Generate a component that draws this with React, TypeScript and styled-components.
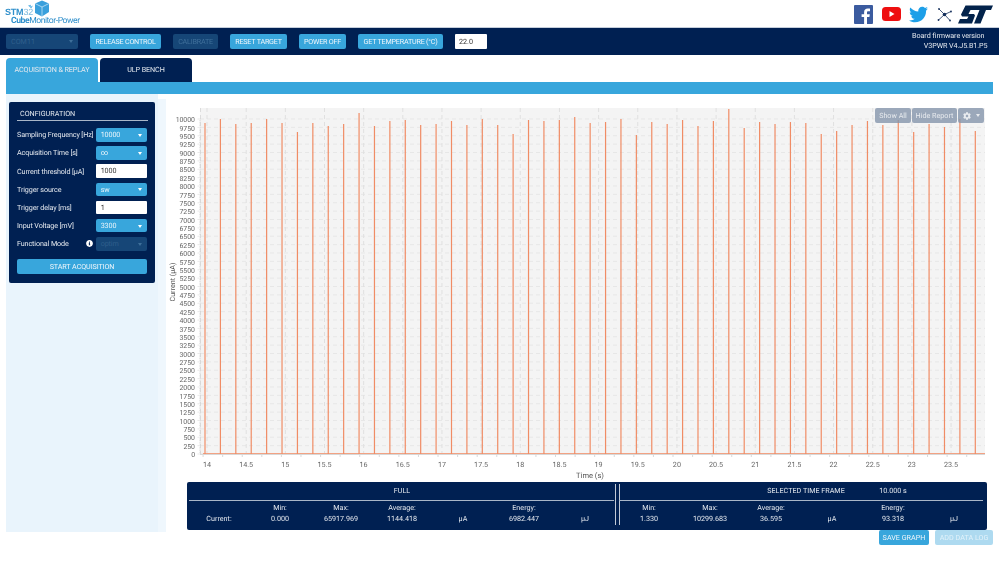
import React from 'react';
import styled, { createGlobalStyle } from 'styled-components';
import { FaCog, FaInfoCircle, FaTwitter } from 'react-icons/fa';

const Global = createGlobalStyle`
  html, body { margin: 0; padding: 0; background: #fff; }
  body { font-family: Roboto, "Liberation Sans", sans-serif; text-rendering: geometricPrecision; }
  * { box-sizing: border-box; }
`;

const NAVY = '#002052';
const BLUE = '#38a6dc';
const INK = '#e4e9ef';

const Page = styled.div`
  width: 999px;
  height: 562px;
  overflow: hidden;
  display: flex;
  flex-direction: column;
  filter: blur(0.3px);
`;
const TopBar = styled.header`
  height: 27px;
  display: flex;
  align-items: flex-start;
  justify-content: space-between;
`;
const Logo = styled.div`
  position: relative;
  width: 90px;
  height: 27px;
  flex: none;
  display: flex;
  flex-direction: column;
  color: #2f8fcb;
`;
const LogoTop = styled.div`
  font-size: 9px;
  line-height: 9px;
  margin: 8px 0 0 5px;
  letter-spacing: -0.2px;
  font-family: "Liberation Sans", sans-serif;
`;
const LogoBottom = styled.div`
  font-size: 8.6px;
  line-height: 9px;
  margin: 0 0 0 11px;
  white-space: nowrap;
  letter-spacing: -0.45px;
`;
const LogoStrong = styled.b`
  font-weight: 700;
`;
const LogoLight = styled.span`
  color: #7ab9de;
`;
const Cube = styled.svg`
  position: absolute;
  left: 27px;
  top: 0;
`;
const Socials = styled.div`
  display: flex;
  align-items: center;
  height: 28px;
  padding-right: 6px;
`;
const Social = styled.span<{ $gap: number }>`
  display: flex;
  margin-left: ${(p) => p.$gap}px;
`;
const NavBar = styled.nav`
  height: 28px;
  flex: none;
  background: ${NAVY};
  border-top: 1px solid #c5cedb;
  display: flex;
  align-items: center;
  padding: 0 12px 1px 6px;
  gap: 12px;
`;
const NavButton = styled.button<{ $w: number; $off?: boolean }>`
  width: ${(p) => p.$w}px;
  height: 15px;
  border: 0;
  padding: 0;
  border-radius: 2px;
  font: 400 7.2px Roboto, sans-serif;
  letter-spacing: -0.22px;
  white-space: nowrap;
  background: ${(p) => (p.$off ? '#164677' : BLUE)};
  color: ${(p) => (p.$off ? '#3f6f9a' : '#eef6fb')};
`;
const NavSelect = styled.div`
  position: relative;
  width: 72px;
  height: 15px;
  border-radius: 2px;
  background: #164677;
  color: #2f5f8c;
  font-size: 7.2px;
  line-height: 15px;
  padding-left: 5px;
`;
const Arrow = styled.i<{ $c?: string }>`
  position: absolute;
  right: 5px;
  top: 50%;
  margin-top: -1px;
  border-left: 2.5px solid transparent;
  border-right: 2.5px solid transparent;
  border-top: 3px solid ${(p) => p.$c || '#fff'};
`;
const TempInput = styled.div`
  width: 32px;
  height: 15px;
  background: #fff;
  border-radius: 1px;
  color: #333;
  font-size: 7.2px;
  line-height: 15px;
  padding-left: 4px;
`;
const Firmware = styled.div`
  margin-left: auto;
  margin-right: -0.5px;
  text-align: right;
  color: ${INK};
  font-size: 7.2px;
  letter-spacing: -0.08px;
  line-height: 10.5px;
`;
const FirmwareTop = styled.div`
  padding-right: 3px;
`;
const Content = styled.main`
  padding: 3px 6px 0;
  flex: 1;
  display: flex;
  flex-direction: column;
`;
const Tabs = styled.div`
  display: flex;
  gap: 2px;
  height: 24px;
  flex: none;
`;
const Tab = styled.div<{ $active?: boolean }>`
  width: 92px;
  border-radius: 4px 4px 0 0;
  background: ${(p) => (p.$active ? BLUE : NAVY)};
  color: ${INK};
  font-size: 7.2px;
  letter-spacing: -0.1px;
  display: flex;
  align-items: center;
  justify-content: center;
  padding-bottom: 2px;
`;
const Band = styled.div`
  height: 12px;
  flex: none;
  background: ${BLUE};
`;
const Workspace = styled.div`
  display: flex;
  flex: 1;
`;
const Sidebar = styled.aside`
  width: 160px;
  height: 438px;
  flex: none;
  display: flex;
`;
const SideMain = styled.div`
  width: 152px;
  background: #e9f4fc;
  padding: 8px 3px;
`;
const SideStrip = styled.div`
  width: 8px;
  margin-top: 5px;
  background: #eff7fd;
`;
const ConfigPanel = styled.section`
  width: 146px;
  height: 181px;
  background: ${NAVY};
  border-radius: 2px;
  padding: 0 8px;
  color: ${INK};
  display: flex;
  flex-direction: column;
`;
const ConfigTitle = styled.div`
  height: 19px;
  border-bottom: 1px solid #a9b6c8;
  margin-right: -1px;
  padding: 4px 0 0 3px;
  font-size: 7.2px;
  line-height: 15px;
`;
const Rows = styled.div`
  margin-top: 7px;
  display: flex;
  flex-direction: column;
  gap: 4.7px;
`;
const Row = styled.div`
  display: grid;
  grid-template-columns: 78.7px 51.3px;
  height: 13.5px;
  align-items: center;
  font-size: 7.2px;
  letter-spacing: -0.12px;
  white-space: nowrap;
`;
const LabelCell = styled.div`
  position: relative;
`;
const InfoDot = styled.span`
  position: absolute;
  right: 3px;
  top: 1px;
  display: flex;
  color: #fff;
`;
const Pick = styled.div<{ $off?: boolean }>`
  position: relative;
  height: 13.5px;
  border-radius: 2px;
  background: ${(p) => (p.$off ? '#164677' : BLUE)};
  color: ${(p) => (p.$off ? '#2f5f8c' : '#eaf5fb')};
  line-height: 13.5px;
  padding-left: 5px;
`;
const Field = styled.div`
  height: 13.5px;
  background: #fff;
  border-radius: 1px;
  color: #333;
  line-height: 13.5px;
  padding-left: 5px;
`;
const StartButton = styled.button`
  margin-top: 8px;
  height: 15px;
  width: 130px;
  flex: none;
  border: 0;
  padding: 0;
  border-radius: 2px;
  background: ${BLUE};
  color: #eef6fb;
  font: 400 7.2px Roboto, sans-serif;
  letter-spacing: -0.1px;
`;
const MainArea = styled.div`
  width: 827px;
  flex: none;
  padding-top: 6px;
`;
const ChartWrap = styled.div`
  position: relative;
  margin-left: 2px;
  width: 820px;
  height: 381.5px;
`;
const Plot = styled.svg`
  display: block;
`;
const ChartTools = styled.div`
  position: absolute;
  top: 8px;
  left: 707px;
  display: flex;
  gap: 1px;
`;
const ToolButton = styled.div<{ $w: number }>`
  width: ${(p) => p.$w}px;
  height: 15px;
  border-radius: 2px;
  background: rgba(133, 149, 171, 0.8);
  color: #e8ebef;
  font-size: 7.2px;
  display: flex;
  align-items: center;
  justify-content: center;
  gap: 5px;
`;
const ToolCaret = styled.i`
  border-left: 2.5px solid transparent;
  border-right: 2.5px solid transparent;
  border-top: 3px solid #e8ebef;
`;
const StatsPanel = styled.section`
  margin-left: 21px;
  width: 800px;
  height: 48.5px;
  background: ${NAVY};
  border-radius: 2px;
  color: ${INK};
  font-size: 7.2px;
  display: flex;
  padding-left: 1.5px;
`;
const StatsSide = styled.div<{ $cols: number }>`
  width: ${(p) => p.$cols * 61}px;
  flex: none;
  display: flex;
  flex-direction: column;
`;
const StatsHead = styled.div<{ $cols: number }>`
  height: 19px;
  border-bottom: 1.5px solid #a9b6c8;
  display: grid;
  grid-template-columns: repeat(${(p) => p.$cols}, 61px);
  align-items: center;
  text-align: center;
  margin-right: 2px;
`;
const HeadCell = styled.div<{ $from: number; $to: number; $shift?: number }>`
  grid-column: ${(p) => p.$from} / ${(p) => p.$to};
  padding-left: ${(p) => p.$shift || 0}px;
  white-space: nowrap;
`;
const StatsBody = styled.div<{ $cols: number }>`
  display: grid;
  grid-template-columns: repeat(${(p) => p.$cols}, 61px);
  grid-template-rows: 10.5px 10.5px;
  padding-top: 2.5px;
  text-align: center;
  line-height: 10.5px;
`;
const Cell = styled.div`
  white-space: nowrap;
`;
const DoubleRule = styled.div`
  width: 5px;
  height: 41px;
  margin: 2.5px 0 0 -1px;
  margin-right: -1px;
  flex: none;
  border-left: 1.3px solid #c0c9d6;
  border-right: 1.3px solid #c0c9d6;
`;
const Actions = styled.div`
  display: flex;
  justify-content: flex-end;
  gap: 6px;
`;
const ActionButton = styled.button<{ $w: number; $off?: boolean }>`
  width: ${(p) => p.$w}px;
  height: 15px;
  border: 0;
  padding: 0;
  border-radius: 2px;
  background: ${(p) => (p.$off ? '#aedaf0' : BLUE)};
  color: ${(p) => (p.$off ? '#e2f2fa' : '#eef6fb')};
  font: 400 7.2px Roboto, sans-serif;
  white-space: nowrap;
`;

const tops = [
  123, 119, 124, 123, 119, 123, 132, 123, 126, 124,
  113, 126, 121, 120, 125, 124, 121, 125, 119, 125, 134, 120, 121, 120, 117, 123, 122, 119, 135, 122, 124,
  120, 126, 121, 109, 128, 122, 124, 122, 123, 134, 131, 125, 121, 125, 120, 132, 124, 127, 119, 131,
];
const yOf = (v: number) => 454 - v * 0.0335;
const xOf = (t: number) => 207 + (t - 14) * 78.32;
const yTicks = Array.from({ length: 41 }, (_, i) => i * 250);
const xTicks = Array.from({ length: 20 }, (_, i) => 14 + i * 0.5);
const yMinor = Array.from({ length: 201 }, (_, i) => i * 50);
const xMinor = Array.from({ length: 40 }, (_, i) => 13.95 + i * 0.25);

const Chart = () => (
  <Plot width={820} height={381} viewBox="168 100 820 381">
    <rect x={200} y={108} width={785} height={346} fill="#f4f4f4" />
    {yTicks.map((v) => (
      <line key={v} x1={200} x2={985} y1={yOf(v)} y2={yOf(v)} stroke="#e7e7e7" strokeWidth={1} strokeDasharray="4 3" />
    ))}
    {xTicks.map((t) => (
      <line key={t} x1={xOf(t)} x2={xOf(t)} y1={108} y2={454} stroke="#e0e0e0" strokeWidth={1} strokeDasharray="4 3" />
    ))}
    <line x1={200.5} x2={200.5} y1={108} y2={454} stroke="#dcdcdc" strokeWidth={1} strokeDasharray="4 3" />
    {yMinor.map((v) => (
      <line key={v} x1={v % 250 === 0 ? 197.5 : 199} x2={201} y1={yOf(v)} y2={yOf(v)} stroke="#d2d2d2" strokeWidth={0.5} />
    ))}
    {xMinor.map((t) => (
      <line key={t} x1={xOf(t)} x2={xOf(t)} y1={454} y2={457} stroke="#cfcfcf" strokeWidth={0.8} />
    ))}
    <line x1={200} x2={985} y1={454.5} y2={454.5} stroke="#d8d8d8" strokeWidth={1} />
    <line x1={203} x2={985} y1={453.5} y2={453.5} stroke="#f2a283" strokeWidth={1} />
    {tops.map((top, i) => {
      const x = 205 + i * 15.406;
      return <line key={i} x1={x} x2={x} y1={top} y2={454} stroke="#f08c65" strokeWidth={1.2} />;
    })}
    {yTicks.map((v) => (
      <text key={v} x={195} y={yOf(v) + 3.2} textAnchor="end" fontSize={6.9} fill="#666" fontFamily="Roboto, sans-serif">
        {v}
      </text>
    ))}
    {xTicks.map((t) => (
      <text key={t} x={xOf(t)} y={466.5} textAnchor="middle" fontSize={7.2} fill="#666" fontFamily="Roboto, sans-serif">
        {t}
      </text>
    ))}
    <text x={590} y={477.5} textAnchor="middle" fontSize={7.5} fill="#555" fontFamily="Roboto, sans-serif">
      Time (s)
    </text>
    <text
      x={174.5}
      y={282}
      textAnchor="middle"
      fontSize={7.2}
      fill="#555"
      fontFamily="Roboto, sans-serif"
      transform="rotate(-90 174.5 282)"
    >
      Current (µA)
    </text>
  </Plot>
);

const FacebookIcon = () => (
  <svg width={19} height={19} viewBox="0 0 19 19">
    <rect width={19} height={19} rx={1} fill="#3b5b9f" />
    <path d="M13 19v-7h2.4l.4-2.8H13V7.5c0-.8.3-1.3 1.4-1.3H16V3.7c-.3 0-1.200-.1-2.200-.1-2.200 0-3.700 1.300-3.700 3.700v1.900H7.600V12h2.500v7z" fill="#fff" />
  </svg>
);
const YoutubeIcon = () => (
  <svg width={19} height={14} viewBox="0 0 19 14">
    <rect width={19} height={14} rx={3.5} fill="#ee0f10" />
    <path d="M7.500 4v6l5-3z" fill="#fff" />
  </svg>
);
const NetworkIcon = () => (
  <svg width={15} height={15} viewBox="0 0 15 15" stroke="#15305c" strokeWidth={0.8} fill="#15305c">
    <path d="M7.500 7.500 2 2M7.500 7.500 14 4.500M7.500 7.500 13 13.500M7.500 7.500 1.500 13" fill="none" />
    <circle cx={7.5} cy={7.5} r={1.8} stroke="none" />
    <circle cx={2} cy={2} r={0.9} stroke="none" />
    <circle cx={14} cy={4.5} r={0.9} stroke="none" />
    <circle cx={13} cy={13.5} r={0.9} stroke="none" />
    <circle cx={1.5} cy={13} r={0.9} stroke="none" />
  </svg>
);
const StLogo = () => (
  <svg width={35} height={19} viewBox="0 0 35 19">
    <path
      fill="#03234b"
      d="M7.500 0.500H35L33 5H28L22.500 18.500H16L21.500 5H12.500L10.500 9H16L17 10.500L14 18.500H0L2 14H9L10.500 11.500H4L3 9.500z"
    />
  </svg>
);

const selectRows = [
  { label: 'Sampling Frequency [Hz]', value: '10000', kind: 'pick' },
  { label: 'Acquisition Time [s]', value: '∞', kind: 'pick' },
  { label: 'Current threshold [µA]', value: '1000', kind: 'field' },
  { label: 'Trigger source', value: 'sw', kind: 'pick' },
  { label: 'Trigger delay [ms]', value: '1', kind: 'field' },
  { label: 'Input Voltage [mV]', value: '3300', kind: 'pick' },
];

const leftStats = ['', 'Min:', 'Max:', 'Average:', '', 'Energy:', ''];
const leftVals = ['Current:', '0.000', '65917.969', '1144.418', 'µA', '6982.447', 'µJ'];
const rightStats = ['Min:', 'Max:', 'Average:', '', 'Energy:', ''];
const rightVals = ['1.330', '10299.683', '36.595', 'µA', '93.318', 'µJ'];

export default function App() {
  return (
    <Page>
      <Global />
      <TopBar>
        <Logo>
          <LogoTop>
            <LogoStrong>STM</LogoStrong>
            <LogoLight>32</LogoLight>
          </LogoTop>
          <LogoBottom>
            <LogoStrong>Cube</LogoStrong>Monitor-Power
          </LogoBottom>
          <Cube width={24} height={18} viewBox="0 0 24 18">
            <path d="M1 5.500l3-.8-.5 2L6 5.500 4.200 8.500 3 7.200z" fill="#5fb3e3" />
            <path d="M15 0.500l7 3v8.500l-7 4.500-7-3.500V3.500z" fill="#3aa0dc" />
            <path d="M8 3.500l7 3.500 7-3.500M15 7v9" stroke="#d5ecf9" strokeWidth={0.7} fill="none" />
          </Cube>
        </Logo>
        <Socials>
          <Social $gap={0}>
            <FacebookIcon />
          </Social>
          <Social $gap={9}>
            <YoutubeIcon />
          </Social>
          <Social $gap={8}>
            <FaTwitter size={19} color="#1d9fe8" />
          </Social>
          <Social $gap={9}>
            <NetworkIcon />
          </Social>
          <Social $gap={6}>
            <StLogo />
          </Social>
        </Socials>
      </TopBar>
      <NavBar>
        <NavSelect>
          COM11
          <Arrow $c="#3f6f9a" />
        </NavSelect>
        <NavButton $w={71}>RELEASE CONTROL</NavButton>
        <NavButton $w={45} $off>
          CALIBRATE
        </NavButton>
        <NavButton $w={57}>RESET TARGET</NavButton>
        <NavButton $w={47}>POWER OFF</NavButton>
        <NavButton $w={85}>GET TEMPERATURE (°C)</NavButton>
        <TempInput>22.0</TempInput>
        <Firmware>
          <FirmwareTop>Board firmware version</FirmwareTop>
          <div>V3PWR V4.J5.B1.P5</div>
        </Firmware>
      </NavBar>
      <Content>
        <Tabs>
          <Tab $active>ACQUISITION &amp; REPLAY</Tab>
          <Tab>ULP BENCH</Tab>
        </Tabs>
        <Band />
        <Workspace>
          <Sidebar>
            <SideMain>
              <ConfigPanel>
                <ConfigTitle>CONFIGURATION</ConfigTitle>
                <Rows>
                  {selectRows.map((r) => (
                    <Row key={r.label}>
                      <div>{r.label}</div>
                      {r.kind === 'pick' ? (
                        <Pick>
                          {r.value}
                          <Arrow />
                        </Pick>
                      ) : (
                        <Field>{r.value}</Field>
                      )}
                    </Row>
                  ))}
                  <Row>
                    <LabelCell>
                      Functional Mode
                      <InfoDot>
                        <FaInfoCircle size={7} />
                      </InfoDot>
                    </LabelCell>
                    <Pick $off>
                      optim
                      <Arrow $c="#3f6f9a" />
                    </Pick>
                  </Row>
                </Rows>
                <StartButton>START ACQUISITION</StartButton>
              </ConfigPanel>
            </SideMain>
            <SideStrip />
          </Sidebar>
          <MainArea>
            <ChartWrap>
              <Chart />
              <ChartTools>
                <ToolButton $w={36}>Show All</ToolButton>
                <ToolButton $w={45}>Hide Report</ToolButton>
                <ToolButton $w={26}>
                  <FaCog size={8} />
                  <ToolCaret />
                </ToolButton>
              </ChartTools>
            </ChartWrap>
            <StatsPanel>
              <StatsSide $cols={7}>
                <StatsHead $cols={7}>
                  <HeadCell $from={4} $to={5}>
                    FULL
                  </HeadCell>
                </StatsHead>
                <StatsBody $cols={7}>
                  {leftStats.map((t, i) => (
                    <Cell key={i}>{t}</Cell>
                  ))}
                  {leftVals.map((t, i) => (
                    <Cell key={i}>{t}</Cell>
                  ))}
                </StatsBody>
              </StatsSide>
              <DoubleRule />
              <StatsSide $cols={6}>
                <StatsHead $cols={6}>
                  <HeadCell $from={3} $to={5} $shift={9}>
                    SELECTED TIME FRAME
                  </HeadCell>
                  <HeadCell $from={5} $to={6}>
                    10.000 s
                  </HeadCell>
                </StatsHead>
                <StatsBody $cols={6}>
                  {rightStats.map((t, i) => (
                    <Cell key={i}>{t}</Cell>
                  ))}
                  {rightVals.map((t, i) => (
                    <Cell key={i}>{t}</Cell>
                  ))}
                </StatsBody>
              </StatsSide>
            </StatsPanel>
            <Actions>
              <ActionButton $w={50}>SAVE GRAPH</ActionButton>
              <ActionButton $w={58} $off>
                ADD DATA LOG
              </ActionButton>
            </Actions>
          </MainArea>
        </Workspace>
      </Content>
    </Page>
  );
}
